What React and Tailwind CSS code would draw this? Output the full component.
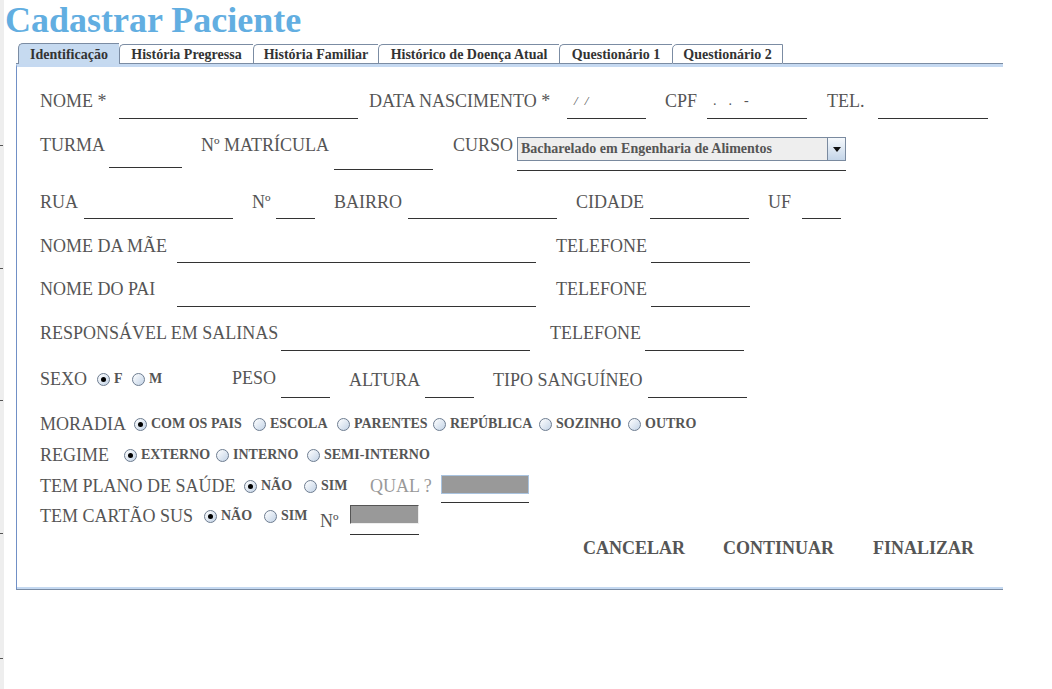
import React from "react";

const Label = ({ className = "", children }) => (
  <span
    className={`shrink-0 whitespace-nowrap text-[18px] leading-[20px] text-[#555555] ${className}`}
  >
    {children}
  </span>
);

const Field = ({ className = "", children }) => (
  <div className={`shrink-0 border-b border-[#333333] ${className}`}>{children}</div>
);

const Radio = ({ checked }) => (
  <span className="flex h-[13px] w-[13px] shrink-0 items-center justify-center rounded-full border border-[#6d7c90] bg-gradient-to-br from-white to-[#c3d3e6]">
    {checked ? <span className="h-[5px] w-[5px] rounded-full bg-black" /> : null}
  </span>
);

const Option = ({ checked, label, className = "" }) => (
  <span className={`flex h-[20px] shrink-0 items-center ${className}`}>
    <Radio checked={checked} />
    <span className="ml-[4px] whitespace-nowrap text-[14px] font-bold leading-[20px] text-[#555555]">
      {label}
    </span>
  </span>
);

const tabs = [
  { label: "Identificação", w: "w-[101px]", active: true },
  { label: "História Pregressa", w: "w-[134px]" },
  { label: "História Familiar", w: "w-[125px]" },
  { label: "Histórico de Doença Atual", w: "w-[181px]" },
  { label: "Questionário 1", w: "w-[113px]" },
  { label: "Questionário 2", w: "w-[111px]", last: true },
];

const Tabs = () => (
  <div className="flex h-[21px] items-end">
    <div className="h-full w-[2px] shrink-0 border-b border-[#7b8ca3]" />
    {tabs.map((t) =>
      t.active ? (
        <div
          key={t.label}
          className={`flex h-[21px] shrink-0 items-center justify-center rounded-tl-[5px] border-l border-t border-[#7b8ca3] bg-[#c6daf0] text-[14px] font-bold text-[#333333] ${t.w}`}
        >
          {t.label}
        </div>
      ) : (
        <div
          key={t.label}
          className={`flex h-[20px] shrink-0 items-center justify-center rounded-tl-[5px] border-b border-l border-t border-[#7b8ca3] bg-white text-[14px] font-bold text-[#333333] ${t.w} ${
            t.last ? "border-r" : ""
          }`}
        >
          {t.label}
        </div>
      )
    )}
    <div className="h-full flex-1 border-b border-[#7b8ca3]" />
  </div>
);

const Combo = () => (
  <div className="h-[36px] w-[329px] shrink-0 border-b border-[#333333] pt-[2px]">
    <div className="flex h-[24px] border border-[#7a8a9f] bg-[#eeeeee]">
      <span className="flex-1 truncate pl-[3px] text-[14px] font-bold leading-[22px] text-[#555555]">
        Bacharelado em Engenharia de Alimentos
      </span>
      <span className="flex w-[18px] items-center justify-center border-l border-[#7a8a9f] bg-gradient-to-b from-[#f6f9fc] to-[#c4d5e8]">
        <svg width="8" height="5" viewBox="0 0 8 5">
          <path d="M0 0h8L4 5z" fill="#111" />
        </svg>
      </span>
    </div>
  </div>
);

export default function App() {
  return (
    <div className="flex min-h-[689px] bg-white font-['Liberation_Serif','Times_New_Roman',serif]">
      <div className="flex w-[4px] shrink-0 flex-col bg-[#eeeeee]">
        <span className="mt-[145px] h-px w-[3px] bg-[#555555]" />
        <span className="mt-[122px] h-px w-[3px] bg-[#555555]" />
        <span className="mt-[131px] h-px w-[3px] bg-[#555555]" />
        <span className="mt-[132px] h-px w-[3px] bg-[#555555]" />
        <span className="mt-[124px] h-px w-[3px] bg-[#555555]" />
      </div>

      <div className="flex-1">
        <h1 className="h-[43px] pl-[1px] text-[36px] font-bold leading-[40px] text-[#62aee1]">
          Cadastrar Paciente
        </h1>

        <div className="ml-[12px] w-[987px]">
          <Tabs />
          <div className="border-b border-l border-t-[3px] border-b-[#7b8ca3] border-l-[#7190c6] border-t-[#c5d9f1]">
            <div className="border-b-2 border-[#c5d9f1] pt-[24px]">
              {/* linha 1 */}
              <div className="flex h-[44px] items-start pl-[23px]">
                <Label className="w-[79px]">NOME *</Label>
                <Field className="h-[28px] w-[239px]" />
                <Label className="ml-[11px] w-[198px]">DATA NASCIMENTO *</Label>
                <Field className="h-[28px] w-[79px]">
                  <div className="flex gap-[7px] pl-[7px] text-[13px] italic leading-[20px] text-[#555555]">
                    <span>/</span>
                    <span>/</span>
                  </div>
                </Field>
                <Label className="ml-[19px] w-[42px]">CPF</Label>
                <Field className="h-[28px] w-[100px]">
                  <div className="flex gap-[12px] pl-[6px] text-[14px] leading-[20px] text-[#555555]">
                    <span>.</span>
                    <span>.</span>
                    <span>-</span>
                  </div>
                </Field>
                <Label className="ml-[20px] w-[51px]">TEL.</Label>
                <Field className="h-[28px] w-[110px]" />
              </div>

              {/* linha 2 */}
              <div className="flex h-[57px] items-start pl-[23px]">
                <Label className="w-[69px]">TURMA</Label>
                <Field className="h-[33px] w-[73px]" />
                <Label className="ml-[19px] w-[133px]">Nº MATRÍCULA</Label>
                <Field className="h-[35px] w-[99px]" />
                <Label className="ml-[20px] w-[64px]">CURSO</Label>
                <Combo />
              </div>

              {/* linha 3 */}
              <div className="flex h-[44px] items-start pl-[23px]">
                <Label className="w-[44px]">RUA</Label>
                <Field className="h-[27px] w-[149px]" />
                <Label className="ml-[19px] w-[24px]">Nº</Label>
                <Field className="h-[27px] w-[39px]" />
                <Label className="ml-[19px] w-[74px]">BAIRRO</Label>
                <Field className="h-[27px] w-[149px]" />
                <Label className="ml-[19px] w-[74px]">CIDADE</Label>
                <Field className="h-[27px] w-[99px]" />
                <Label className="ml-[19px] w-[34px]">UF</Label>
                <Field className="h-[27px] w-[39px]" />
              </div>

              {/* linha 4 */}
              <div className="flex h-[43px] items-start pl-[23px]">
                <Label className="w-[137px]">NOME DA MÃE</Label>
                <Field className="h-[27px] w-[359px]" />
                <Label className="ml-[20px] w-[95px]">TELEFONE</Label>
                <Field className="h-[27px] w-[99px]" />
              </div>

              {/* linha 5 */}
              <div className="flex h-[44px] items-start pl-[23px]">
                <Label className="w-[137px]">NOME DO PAI</Label>
                <Field className="h-[28px] w-[359px]" />
                <Label className="ml-[20px] w-[95px]">TELEFONE</Label>
                <Field className="h-[28px] w-[99px]" />
              </div>

              {/* linha 6 */}
              <div className="flex h-[46px] items-start pl-[23px]">
                <Label className="w-[241px]">RESPONSÁVEL EM SALINAS</Label>
                <Field className="h-[28px] w-[249px]" />
                <Label className="ml-[20px] w-[95px]">TELEFONE</Label>
                <Field className="h-[28px] w-[99px]" />
              </div>

              {/* linha 7 */}
              <div className="flex h-[45px] items-start pl-[23px]">
                <Label className="w-[57px]">SEXO</Label>
                <div className="flex w-[135px] shrink-0">
                  <Option checked label="F" className="w-[35px]" />
                  <Option label="M" />
                </div>
                <Label className="-mt-[1px] w-[49px]">PESO</Label>
                <Field className="h-[29px] w-[49px]" />
                <Label className="ml-[19px] mt-[1px] w-[76px]">ALTURA</Label>
                <Field className="h-[29px] w-[49px]" />
                <Label className="ml-[19px] mt-[1px] w-[155px]">TIPO SANGUÍNEO</Label>
                <Field className="h-[29px] w-[99px]" />
              </div>

              {/* linha 8 */}
              <div className="flex h-[31px] items-start pl-[23px]">
                <Label className="w-[94px]">MORADIA</Label>
                <Option checked label="COM OS PAIS" className="w-[119px]" />
                <Option label="ESCOLA" className="w-[84px]" />
                <Option label="PARENTES" className="w-[96px]" />
                <Option label="REPÚBLICA" className="w-[106px]" />
                <Option label="SOZINHO" className="w-[89px]" />
                <Option label="OUTRO" />
              </div>

              {/* linha 9 */}
              <div className="flex h-[31px] items-start pl-[23px]">
                <Label className="w-[84px]">REGIME</Label>
                <Option checked label="EXTERNO" className="w-[92px]" />
                <Option label="INTERNO" className="w-[91px]" />
                <Option label="SEMI-INTERNO" />
              </div>

              {/* linha 10 */}
              <div className="flex h-[30px] items-start pl-[23px]">
                <Label className="w-[204px]">TEM PLANO DE SAÚDE</Label>
                <Option checked label="NÃO" className="w-[60px]" />
                <Option label="SIM" className="w-[66px]" />
                <Label className="w-[71px] text-[#999999]">QUAL ?</Label>
                <Field className="-mt-[1px] h-[28px] w-[88px]">
                  <div className="h-[19px] border border-[#a9c3df] bg-[#999999]" />
                </Field>
              </div>

              {/* linha 11 */}
              <div className="flex h-[32px] items-start pl-[23px]">
                <Label className="w-[164px]">TEM CARTÃO SUS</Label>
                <Option checked label="NÃO" className="w-[60px]" />
                <Option label="SIM" className="w-[56px]" />
                <Label className="mt-[5px] w-[30px]">Nº</Label>
                <Field className="-mt-[1px] h-[30px] w-[69px]">
                  <div className="h-[19px] border border-b-[#eeeeee] border-l-[#555555] border-r-[#eeeeee] border-t-[#555555] bg-[#999999]" />
                </Field>
              </div>

              {/* botoes */}
              <div className="flex h-[49px] items-start pl-[566px]">
                <span className="w-[140px] shrink-0 text-[18px] font-bold leading-[20px] text-[#555555]">
                  CANCELAR
                </span>
                <span className="w-[150px] shrink-0 text-[18px] font-bold leading-[20px] text-[#555555]">
                  CONTINUAR
                </span>
                <span className="shrink-0 text-[18px] font-bold leading-[20px] text-[#555555]">
                  FINALIZAR
                </span>
              </div>
            </div>
          </div>
        </div>
      </div>
    </div>
  );
}
